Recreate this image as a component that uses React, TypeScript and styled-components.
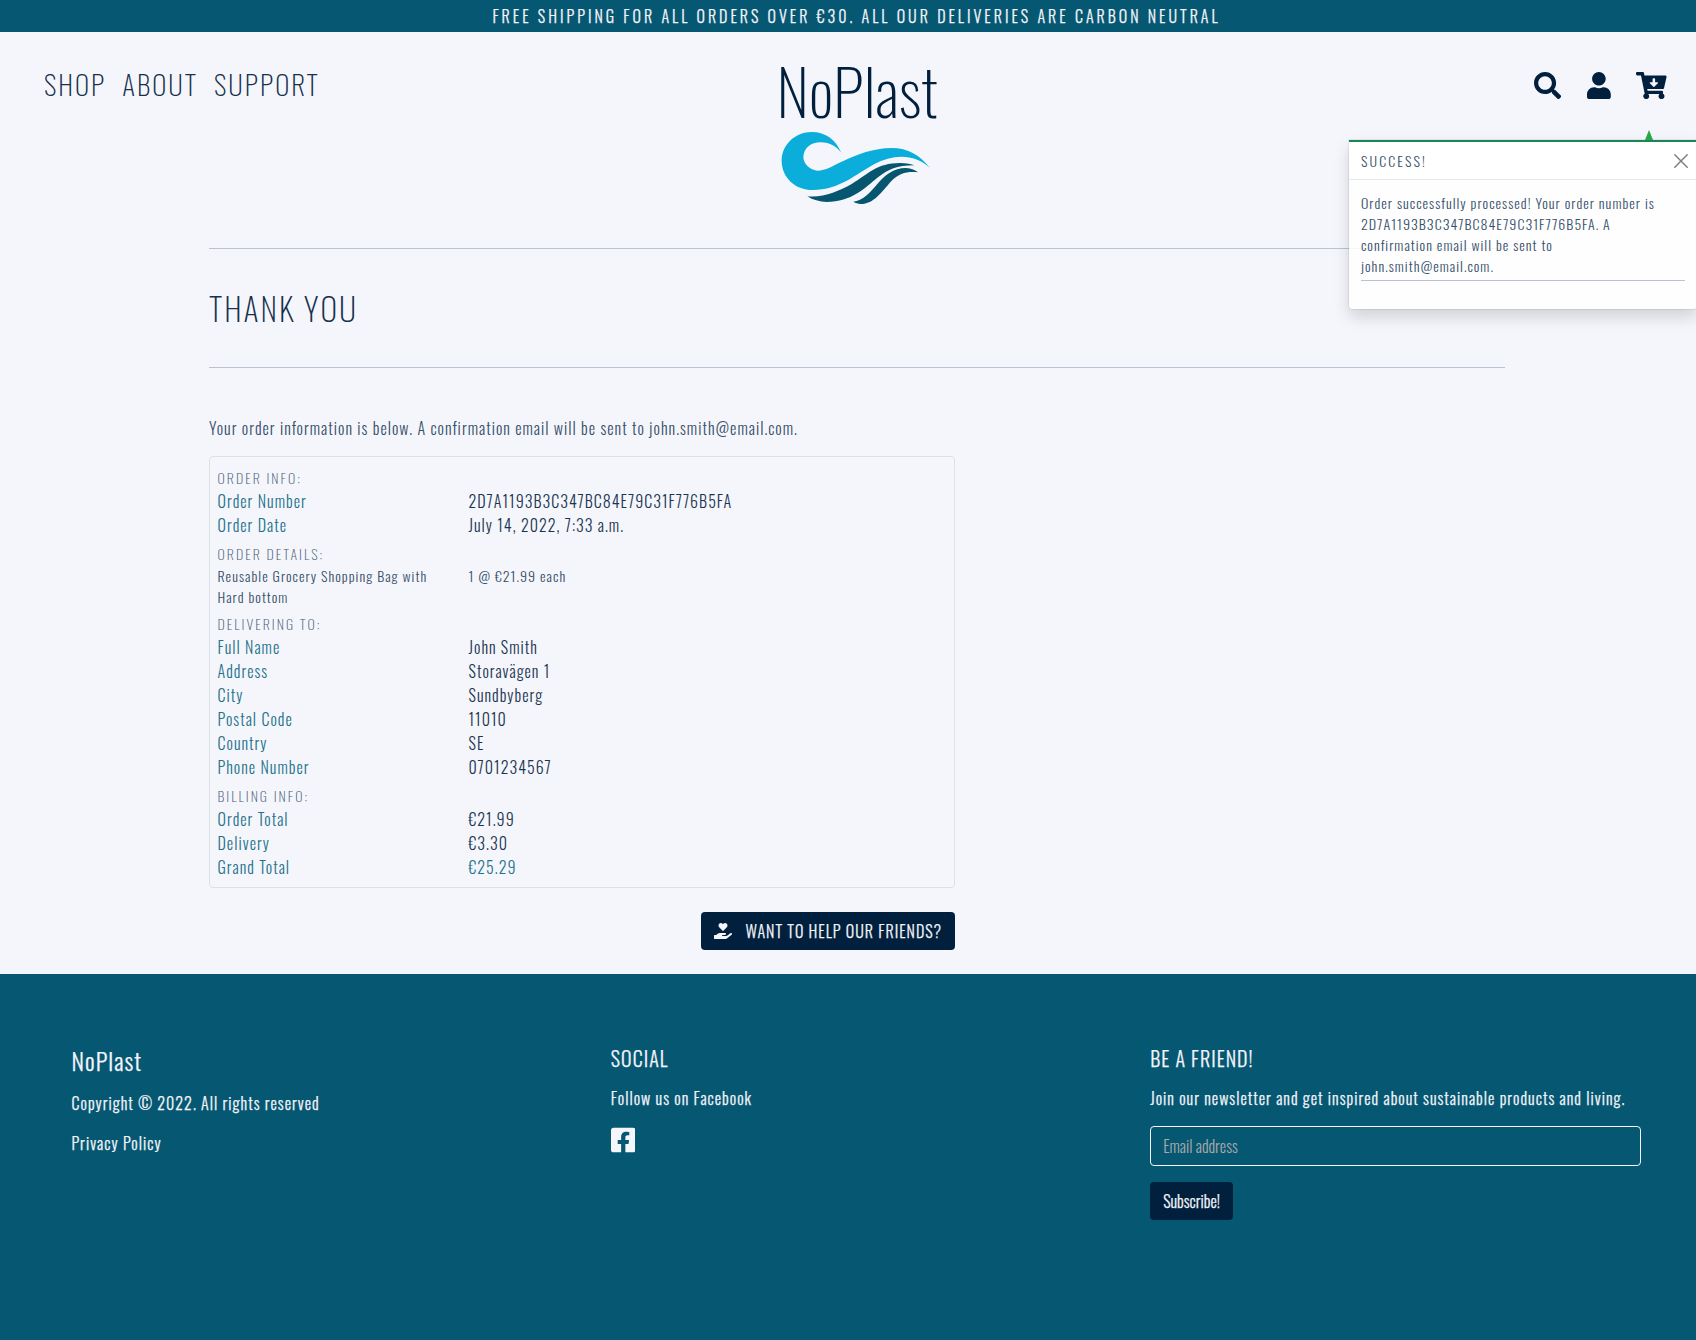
import React from "react";
import styled, { createGlobalStyle, css } from "styled-components";
import { FaSearch, FaUser, FaCartArrowDown, FaHandHoldingHeart, FaFacebookSquare } from "react-icons/fa";

const navy = "#00203d";
const headingNavy = "#15314d";
const softNavy = "#37506a";
const valueNavy = "#1a3550";
const mutedNavy = "#48607a";
const teal = "#065872";
const labelTeal = "#1f738b";
const paper = "#f5f6fc";
const rule = "#b9c3d1";

const GlobalStyle = createGlobalStyle`
  *, *::before, *::after { box-sizing: border-box; }
  html { overflow: hidden; }
  body {
    margin: 0;
    background: ${paper};
    color: ${navy};
    font-family: Oswald, "Open Sans Condensed", "Open Sans", sans-serif;
    font-size: 16px;
    font-weight: 300;
    line-height: 1.5;
  }
  h1, h2, h3, p, dl, dd, dt { margin: 0; font-weight: inherit; }
  a { color: inherit; text-decoration: none; }
`;

const onDark = css`
  color: ${paper};
  -webkit-text-stroke: 0.25px ${paper};
`;

const Page = styled.div`
  position: relative;
  width: 100%;
  min-height: 1340px;
  display: flex;
  flex-direction: column;
`;

const Banner = styled.div`
  ${onDark}
  height: 32px;
  padding: 4px 0 0 17px;
  background: ${teal};
  text-align: center;
  letter-spacing: 3px;
  text-transform: uppercase;
`;

const Header = styled.header`
  height: 216px;
  display: grid;
  grid-template-columns: 1fr 160px 1fr;
  align-items: start;
  padding: 0 29px 0 44px;
`;

const Nav = styled.nav`
  display: flex;
  gap: 16px;
  padding-top: 32px;
  color: ${headingNavy};
  font-size: 27.2px;
  line-height: 40px;
  font-weight: 200;
  letter-spacing: 2px;
`;

const Brand = styled.a`
  display: flex;
  flex-direction: column;
  padding: 20px 0 0 1px;
`;

const BrandName = styled.span`
  font-size: 63px;
  line-height: 76px;
  font-weight: 200;
  white-space: nowrap;
`;

const WaveMark = styled.svg`
  display: block;
  width: 240px;
  height: 80px;
  margin: 2px 0 0 3.3px;
`;

const Tools = styled.div`
  display: flex;
  justify-content: flex-end;
  gap: 25.9px;
  padding-top: 40px;
`;

const SearchIcon = styled(FaSearch)`
  width: 27.2px;
  height: 27.2px;
`;

const UserIcon = styled(FaUser)`
  width: 23.8px;
  height: 27.2px;
`;

const CartIcon = styled(FaCartArrowDown)`
  width: 30.6px;
  height: 27.2px;
`;

const Container = styled.main`
  width: 1296px;
  margin-left: 209px;
`;

const TitleBar = styled.section`
  height: 120px;
  padding-top: 40px;
  border-top: 1px solid ${rule};
  border-bottom: 1px solid ${rule};
`;

const Title = styled.h1`
  color: ${headingNavy};
  font-size: 32px;
  line-height: 38.4px;
  font-weight: 200;
  letter-spacing: 2px;
  text-transform: uppercase;
`;

const OrderColumn = styled.section`
  width: 746px;
  padding-top: 48px;
  display: flex;
  flex-direction: column;
`;

const Intro = styled.p`
  margin-bottom: 16px;
  color: ${softNavy};
  letter-spacing: 1.02px;
`;

const Card = styled.div`
  display: flex;
  flex-direction: column;
  gap: 4px;
  padding: 8px 8px 8px 7.5px;
  border: 1px solid #dee2e6;
  border-radius: 4px;
`;

const Group = styled.section`
  display: flex;
  flex-direction: column;
`;

const GroupTitle = styled.h3`
  height: 24px;
  padding-top: 1px;
  color: ${mutedNavy};
  font-size: 14px;
  line-height: 24px;
  font-weight: 200;
  letter-spacing: 2.02px;
  text-transform: uppercase;
`;

const Line = styled.dl<{ $small?: boolean }>`
  display: grid;
  grid-template-columns: 227px 1fr;
  column-gap: 24px;
  letter-spacing: 1.02px;
  font-size: ${p => (p.$small ? 14 : 16)}px;
`;

const Label = styled.dt<{ $plain?: boolean }>`
  color: ${p => (p.$plain ? softNavy : labelTeal)};
`;

const Value = styled.dd<{ $tone: "plain" | "soft" | "accent" }>`
  color: ${p => ({ plain: valueNavy, soft: softNavy, accent: labelTeal })[p.$tone]};
`;

const FriendsButton = styled.a`
  ${onDark}
  align-self: flex-end;
  display: flex;
  align-items: center;
  gap: 14px;
  width: 254px;
  height: 38px;
  margin-top: 24px;
  padding: 0 12.5px;
  border-radius: 4px;
  background: ${navy};
  letter-spacing: 1px;
  text-transform: uppercase;
  white-space: nowrap;
`;

const GiveIcon = styled(FaHandHoldingHeart)`
  width: 18px;
  height: 16px;
`;

const Footer = styled.footer`
  ${onDark}
  margin-top: 24px;
  flex: 1;
  padding: 72px 0 0 71.5px;
  background: ${teal};
  display: grid;
  grid-template-columns: repeat(3, 491.33px);
  column-gap: 48px;
  align-items: start;
`;

const FooterColumn = styled.div`
  display: flex;
  flex-direction: column;
  align-items: flex-start;
  gap: 16px;
`;

const FooterTitle = styled.h2<{ $brand?: boolean }>`
  font-size: ${p => (p.$brand ? 24 : 20)}px;
  line-height: 1.2;
  letter-spacing: 1.05px;
`;

const FooterText = styled.p`
  letter-spacing: 1.02px;
  white-space: nowrap;
`;

const FacebookIcon = styled(FaFacebookSquare)`
  width: 24.5px;
  height: 28px;
`;

const EmailInput = styled.input`
  width: 100%;
  height: 40px;
  padding: 0 12px;
  border: 1px solid ${paper};
  border-radius: 4px;
  background: transparent;
  color: ${paper};
  font: inherit;
  -webkit-text-stroke: 0;
  &::placeholder { color: #a9a9a9; opacity: 1; }
`;

const SubscribeButton = styled.button`
  ${onDark}
  height: 38px;
  padding: 0 13px;
  border: 0;
  border-radius: 4px;
  background: ${navy};
  font: inherit;
`;

const Toast = styled.aside`
  position: absolute;
  top: 140px;
  left: 1349px;
  width: 348px;
  height: 169px;
  border-top: 2px solid #198754;
  border-radius: 0 0 4px 4px;
  background: rgba(255, 255, 255, 0.85);
  box-shadow: 0 8px 16px rgba(0, 0, 0, 0.15), 0 0 0 1px rgba(0, 0, 0, 0.06);
  color: ${softNavy};
  font-size: 14px;
  letter-spacing: 1.02px;
`;

const ToastArrow = styled.span`
  position: absolute;
  top: -12px;
  left: 296px;
  border-left: 4px solid transparent;
  border-right: 4px solid transparent;
  border-bottom: 10px solid #28a745;
`;

const ToastHeader = styled.div`
  height: 38px;
  display: flex;
  justify-content: space-between;
  align-items: center;
  padding: 0 9px 0 12px;
  border-bottom: 1px solid #e6e9ef;
  background: rgba(255, 255, 255, 0.85);
  letter-spacing: 2.1px;
`;

const CloseIcon = styled.svg`
  width: 14px;
  height: 14px;
`;

const ToastBody = styled.div`
  padding: 12px 12px 0;
`;

const ToastText = styled.p`
  width: 302px;
`;

const ToastRule = styled.hr`
  margin: 4px 0 0;
  border: 0;
  border-top: 1px solid ${rule};
`;

const Wave = () => (
  <WaveMark viewBox="120 270 720 240">
    <path
      fill="#0baedb"
      d="M304 338C287 300 258 276 215 276C165 276 125 315 125 362C125 412 165 450 218 450C300 450 348 402 402 373C462 341 524 342 570 384C540 346 504 324 455 324C400 324 352 344 310 363C277 378 258 392 232 392C207 388 190 370 190 350C192 324 212 307 242 307C270 307 290 320 304 338Z"
    />
    <path fill="#07566f" d="M202 469C250 474 295 454 335 432C385 402 410 369 480 369C500 369 515 372 523 376C470 376 445 388 414 412C375 444 335 486 260 486C238 485 218 480 202 469Z" />
    <path fill="#07566f" d="M340 485C368 483 390 458 412 432C435 405 460 384 498 384C515 385 526 390 534 397C500 394 478 400 455 422C425 455 402 492 362 492C354 491 347 489 340 485Z" />
  </WaveMark>
);

interface OrderGroup {
  title: string;
  small?: boolean;
  rows: [string, string][];
}

const groups: OrderGroup[] = [
  {
    title: "Order Info:",
    rows: [
      ["Order Number", "2D7A1193B3C347BC84E79C31F776B5FA"],
      ["Order Date", "July 14, 2022, 7:33 a.m."],
    ],
  },
  {
    title: "Order Details:",
    small: true,
    rows: [["Reusable Grocery Shopping Bag with Hard bottom", "1 @ €21.99 each"]],
  },
  {
    title: "Delivering To:",
    rows: [
      ["Full Name", "John Smith"],
      ["Address", "Storavägen 1"],
      ["City", "Sundbyberg"],
      ["Postal Code", "11010"],
      ["Country", "SE"],
      ["Phone Number", "0701234567"],
    ],
  },
  {
    title: "Billing Info:",
    rows: [
      ["Order Total", "€21.99"],
      ["Delivery", "€3.30"],
      ["Grand Total", "€25.29"],
    ],
  },
];

export default function App() {
  return (
    <Page>
      <GlobalStyle />
      <Banner>Free shipping for all orders over €30. All our deliveries are carbon neutral</Banner>
      <Header>
        <Nav>
          <a>SHOP</a>
          <a>ABOUT</a>
          <a>SUPPORT</a>
        </Nav>
        <Brand>
          <BrandName>NoPlast</BrandName>
          <Wave />
        </Brand>
        <Tools>
          <SearchIcon />
          <UserIcon />
          <CartIcon />
        </Tools>
      </Header>
      <Container>
        <TitleBar>
          <Title>Thank you</Title>
        </TitleBar>
        <OrderColumn>
          <Intro>Your order information is below. A confirmation email will be sent to john.smith@email.com.</Intro>
          <Card>
            {groups.map(group => (
              <Group key={group.title}>
                <GroupTitle>{group.title}</GroupTitle>
                {group.rows.map(([label, value]) => (
                  <Line key={label} $small={group.small}>
                    <Label $plain={group.small}>{label}</Label>
                    <Value $tone={label === "Grand Total" ? "accent" : group.small ? "soft" : "plain"}>{value}</Value>
                  </Line>
                ))}
              </Group>
            ))}
          </Card>
          <FriendsButton>
            <GiveIcon />
            <span>Want to help our friends?</span>
          </FriendsButton>
        </OrderColumn>
      </Container>
      <Footer>
        <FooterColumn>
          <FooterTitle $brand>NoPlast</FooterTitle>
          <FooterText>Copyright © 2022. All rights reserved</FooterText>
          <FooterText as="a">Privacy Policy</FooterText>
        </FooterColumn>
        <FooterColumn>
          <FooterTitle>SOCIAL</FooterTitle>
          <FooterText>Follow us on Facebook</FooterText>
          <FacebookIcon />
        </FooterColumn>
        <FooterColumn>
          <FooterTitle>BE A FRIEND!</FooterTitle>
          <FooterText>Join our newsletter and get inspired about sustainable products and living.</FooterText>
          <EmailInput placeholder="Email address" />
          <SubscribeButton>Subscribe!</SubscribeButton>
        </FooterColumn>
      </Footer>
      <Toast>
        <ToastArrow />
        <ToastHeader>
          <span>SUCCESS!</span>
          <CloseIcon viewBox="0 0 14 14" stroke="#808080" strokeWidth="1.5" strokeLinecap="round">
            <path d="M.8.8l12.4 12.4M13.2.8L.8 13.2" />
          </CloseIcon>
        </ToastHeader>
        <ToastBody>
          <ToastText>
            Order successfully processed! Your order number is 2D7A1193B3C347BC84E79C31F776B5FA. A confirmation email
            will be sent to john.smith@email.com.
          </ToastText>
          <ToastRule />
        </ToastBody>
      </Toast>
    </Page>
  );
}
